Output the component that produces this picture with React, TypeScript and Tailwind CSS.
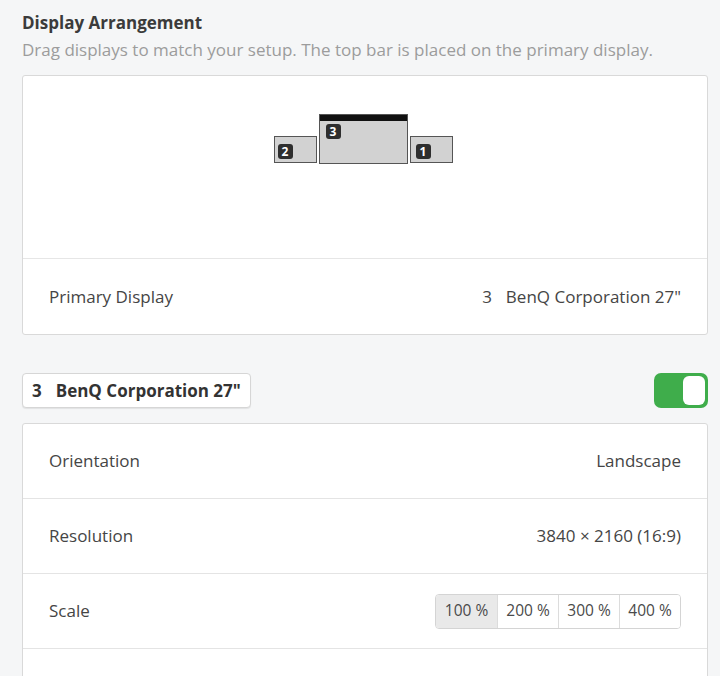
import React from 'react';

const font = { fontFamily: '"Open Sans", "Noto Sans", sans-serif' };

const Badge = ({ n }: { n: string }) => (
  <span className="flex h-[15px] w-[15px] items-center justify-center rounded-[3px] bg-[#2e2e2e] text-[12px] font-bold leading-none text-white">
    {n}
  </span>
);

const Row = ({ label, children, last }: { label: string; children: React.ReactNode; last?: boolean }) => (
  <div className={`flex h-[75px] items-center justify-between px-[26px] ${last ? '' : 'border-b border-[#e4e4e4]'}`}>
    <span className="text-[17px] text-[#454545]">{label}</span>
    <div className="flex text-[17px] text-[#454545]">{children}</div>
  </div>
);

export default function App() {
  const scales = ['100 %', '200 %', '300 %', '400 %'];

  return (
    <div className="h-[676px] overflow-hidden bg-[#f5f6f7] pl-[22px] pr-[12px] pt-[11px]" style={font}>
      <h1 className="text-[17px] font-bold leading-[24px] text-[#3b3b3b]">Display Arrangement</h1>
      <p className="mt-[3px] whitespace-nowrap text-[17px] leading-[24px] text-[#9c9c9c]">
        Drag displays to match your setup. The top bar is placed on the primary display.
      </p>

      <section className="mt-[13px] w-[686px] rounded-[3px] border border-[#d9d9d9] bg-white">
        <div className="flex h-[183px] items-start justify-center border-b border-[#e6e6e6] pr-[4px] pt-[38px]">
          <div className="flex items-end gap-[2px]">
            <div className="mb-[1px] flex h-[27px] w-[43px] items-end border border-[#555] bg-[#d2d2d2] pb-[3px] pl-[3px]">
              <Badge n="2" />
            </div>
            <div className="flex h-[50px] w-[89px] flex-col border border-[#555] bg-[#d2d2d2]">
              <div className="h-[6px] bg-[#111]" />
              <div className="pl-[6px] pt-[3px]">
                <Badge n="3" />
              </div>
            </div>
            <div className="mb-[1px] flex h-[27px] w-[43px] items-end border border-[#555] bg-[#d2d2d2] pb-[3px] pl-[5px]">
              <Badge n="1" />
            </div>
          </div>
        </div>
        <Row label="Primary Display" last>
          <span className="mr-[14px]">3</span>
          <span>BenQ Corporation 27"</span>
        </Row>
      </section>

      <div className="mt-[38px] flex w-[686px] items-center justify-between">
        <button className="flex h-[35px] items-center rounded-[4px] border border-[#d6d6d6] bg-white px-[9px] text-[17px] font-bold text-[#333] shadow-[0_1px_1px_rgba(0,0,0,0.08)]">
          <span className="mr-[14px]">3</span>
          <span>BenQ Corporation 27"</span>
        </button>
        <div className="flex h-[35px] w-[54px] items-center justify-end rounded-[7px] bg-[#3fad4b] pr-[3px]">
          <div className="h-[29px] w-[22px] rounded-[6px] bg-white" />
        </div>
      </div>

      <section className="mt-[15px] w-[686px] rounded-t-[3px] border border-[#d9d9d9] bg-white">
        <Row label="Orientation">Landscape</Row>
        <Row label="Resolution">3840 × 2160 (16:9)</Row>
        <Row label="Scale">
          <div className="flex h-[35px] overflow-hidden rounded-[4px] border border-[#d4d4d4] text-[15.5px] text-[#4a4a4a]">
            {scales.map((s, i) => (
              <span
                key={s}
                className={`flex w-[61px] items-center justify-center ${i > 0 ? 'border-l border-[#dcdcdc]' : ''} ${i === 0 ? 'bg-[#e9e9e9]' : 'bg-white'}`}
              >
                {s}
              </span>
            ))}
          </div>
        </Row>
        <div className="h-[40px]" />
      </section>
    </div>
  );
}
